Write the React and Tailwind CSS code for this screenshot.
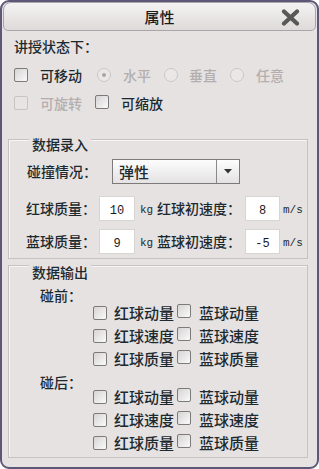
import React from 'react';

const font = { fontFamily: '"Noto Sans CJK SC", "Noto Sans", sans-serif' };

const CheckBox = ({ disabled }) => (
  <span
    className={`inline-block w-[14px] h-[14px] shrink-0 rounded-[2px] border ${
      disabled
        ? 'border-[#c8c4c4] bg-[#e8e4e4]'
        : 'border-[#7d7a7a] bg-gradient-to-br from-[#d6d3d3] to-[#fbfbfb]'
    }`}
  />
);

const Radio = ({ checked }) => (
  <span className="w-[14px] h-[14px] shrink-0 rounded-full border border-[#cbc7c7] bg-[#ebe7e7] flex items-center justify-center">
    {checked && <span className="w-[4px] h-[4px] rounded-full bg-[#a9a5a5]" />}
  </span>
);

const NumBox = ({ value, w }) => (
  <div
    className={`${w} h-[25px] bg-white border border-[#d8d4d4] flex items-end justify-center pb-[3px] text-[12px] leading-none text-[#1a1a1a]`}
    style={{ fontFamily: '"Liberation Mono", monospace' }}
  >
    {value}
  </div>
);

const Unit = ({ children, className = '' }) => (
  <span
    className={`text-[11px] leading-none text-[#1c2a30] pt-[3px] whitespace-nowrap ${className}`}
    style={{ fontFamily: '"Liberation Mono", monospace' }}
  >
    {children}
  </span>
);

const OutputRows = () => (
  <div className="pl-[84px] flex flex-col">
    {[['红球动量', '蓝球动量'], ['红球速度', '蓝球速度'], ['红球质量', '蓝球质量']].map(([a, b]) => (
      <div key={a} className="h-[23px] flex items-center whitespace-nowrap">
        <CheckBox />
        <span className="ml-[7px] w-[60px] text-[15px] leading-[20px]">{a}</span>
        <span className="ml-[3px]"><CheckBox /></span>
        <span className="ml-[8px] text-[15px] leading-[20px]">{b}</span>
      </div>
    ))}
  </div>
);

export default function App() {
  return (
    <div
      className="w-[319px] h-[469px] bg-[#e6e2e2] border-[2px] border-[#5e5878] rounded-[9px] overflow-hidden flex flex-col text-[14px] font-medium text-[#1c2a30] whitespace-nowrap"
      style={font}
    >
      {/* title bar */}
      <div className="h-[29px] shrink-0 mx-[1px] rounded-t-[8px] rounded-b-[5px] border border-[#a9a5ab] bg-gradient-to-b from-[#f4f2f2] to-[#dedada] flex items-center relative">
        <span className="flex-1 text-center text-[15px] leading-none text-[#1a1a1a]">属性</span>
        <svg className="absolute right-[15px] top-[6px]" width="19" height="17" viewBox="0 0 19 17">
          <path d="M3 2.5 L16 14.5 M16 2.5 L3 14.5" stroke="#585858" strokeWidth="4.2" strokeLinecap="round" />
        </svg>
      </div>

      <div className="pl-[12px] mt-[7px] leading-[16px]">讲授状态下：</div>

      <div className="pl-[12px] mt-[11px] h-[20px] flex items-center">
        <CheckBox />
        <span className="ml-[12px]">可移动</span>
        <span className="ml-[15px]"><Radio checked /></span>
        <span className="ml-[12px] text-[#b3afaf]">水平</span>
        <span className="ml-[13px]"><Radio /></span>
        <span className="ml-[11px] text-[#b3afaf]">垂直</span>
        <span className="ml-[13px]"><Radio /></span>
        <span className="ml-[12px] text-[#b3afaf]">任意</span>
      </div>

      <div className="pl-[12px] mt-[8px] h-[20px] flex items-center">
        <CheckBox disabled />
        <span className="ml-[12px] text-[#b3afaf]">可旋转</span>
        <span className="ml-[13px]"><CheckBox /></span>
        <span className="ml-[12px]">可缩放</span>
      </div>

      {/* 数据录入 */}
      <div className="ml-[6px] mr-[9px] mt-[26px] border border-[#c6c2c2] shadow-[inset_1px_1px_0_#f6f4f4] flex flex-col pl-[17px] pb-[4px]">
        <span className="-mt-[4px] ml-[3px] self-start px-[3px] bg-[#e6e2e2] leading-[16px]">数据录入</span>

        <div className="mt-[7px] flex items-center">
          <span className="w-[71px] pl-[1px]">碰撞情况：</span>
          <div className="ml-[15px] w-[128px] h-[25px] border border-[#7c7a7a] bg-gradient-to-b from-[#fdfdfd] to-[#e4e2e2] flex">
            <span className="flex-1 pl-[6px] text-[15px] leading-[23px]">弹性</span>
            <span className="w-[23px] border-l border-[#8a8888] flex items-center justify-center">
              <svg width="8" height="5" viewBox="0 0 8 5"><path d="M0 0 H8 L4 4.5 Z" fill="#333" /></svg>
            </span>
          </div>
        </div>

        <div className="mt-[12px] flex items-center">
          <span className="w-[70px]">红球质量：</span>
          <div className="ml-[3px]"><NumBox value="10" w="w-[36px]" /></div>
          <Unit className="ml-[5px] w-[14px]">kg</Unit>
          <span className="ml-[3px] w-[84px]">红球初速度：</span>
          <div className="ml-[4px]"><NumBox value="8" w="w-[35px]" /></div>
          <Unit className="ml-[3px]">m/s</Unit>
        </div>

        <div className="mt-[8px] flex items-center">
          <span className="w-[70px]">蓝球质量：</span>
          <div className="ml-[3px]"><NumBox value="9" w="w-[36px]" /></div>
          <Unit className="ml-[5px] w-[14px]">kg</Unit>
          <span className="ml-[3px] w-[84px]">蓝球初速度：</span>
          <div className="ml-[4px]"><NumBox value="-5" w="w-[35px]" /></div>
          <Unit className="ml-[3px]">m/s</Unit>
        </div>
      </div>

      {/* 数据输出 */}
      <div className="ml-[6px] mr-[9px] mt-[6px] border border-[#c6c2c2] shadow-[inset_1px_1px_0_#f6f4f4] flex flex-col pb-[3px]">
        <span className="-mt-[2px] ml-[20px] self-start px-[3px] bg-[#e6e2e2] leading-[16px]">数据输出</span>
        <div className="mt-[8px] pl-[31px] leading-[14px]">碰前：</div>
        <div className="-mt-[1px]"><OutputRows /></div>
        <div className="mt-[5px] pl-[31px] leading-[14px]">碰后：</div>
        <div className="-mt-[4px]"><OutputRows /></div>
      </div>
    </div>
  );
}
